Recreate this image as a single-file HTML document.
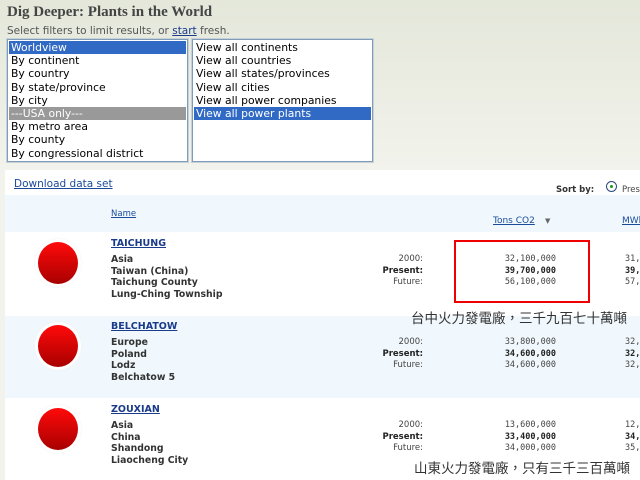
<!DOCTYPE html>
<html><head><meta charset="utf-8">
<style>
*{margin:0;padding:0;box-sizing:border-box}
body{width:640px;height:480px;overflow:hidden;position:relative;background:linear-gradient(#e4e7da,#f2f3ec 170px);font-family:"DejaVu Sans","Liberation Sans",sans-serif;}
.a{position:absolute;white-space:nowrap}
h1{position:absolute;left:7px;top:4px;font:bold 15px "Liberation Serif",serif;color:#444}
.sub{left:7px;top:25px;font-size:10.5px;color:#555}
.sub u{color:#1a3a8a}
.box{position:absolute;top:39px;height:123px;background:#fff;border:1px solid #7f9db9;box-shadow:0 0 0 1px #c8d0d8;padding:1px;font-size:10.8px;line-height:13.2px;color:#000}
.box div{padding-left:2px}
.sel{background:#316ac5;color:#fff}
.gr{background:#999;color:#fff}
.panel{position:absolute;left:5px;top:170px;width:635px;height:310px;background:#fff}
.lk{color:#1a4b9a;text-decoration:underline}
.bl{background:#f0f8fd}
.circ{position:absolute;width:46px;height:48px;border-radius:50%;background:#fff;box-shadow:0 0 2px #eee}
.circ i{position:absolute;left:3px;top:3px;width:40px;height:42px;border-radius:50%;background:linear-gradient(#ff0a0a,#a80000)}
.nm{font-size:9.5px;font-weight:bold;color:#1a3a8a;text-decoration:underline}
.info{font-size:9.3px;font-weight:bold;color:#333;line-height:11.5px}
.lab{font-size:8.5px;color:#444;line-height:11.5px;text-align:right;width:80px}
.num{font-family:"DejaVu Sans Mono","Liberation Mono",monospace;font-size:8.5px;color:#444;line-height:11.5px;text-align:right;width:100px}
.b{font-weight:bold;color:#222}
.cj{font-family:"Liberation Sans","Noto Sans CJK TC",sans-serif;font-size:13.5px;color:#333}
</style></head><body>
<h1>Dig Deeper: Plants in the World</h1>
<div class="a sub">Select filters to limit results, or <u>start</u> fresh.</div>
<div class="box" style="left:7px;width:181px">
<div class="sel">Worldview</div><div>By continent</div><div>By country</div><div>By state/province</div><div>By city</div><div class="gr">---USA only---</div><div>By metro area</div><div>By county</div><div>By congressional district</div></div>
<div class="box" style="left:192px;width:181px">
<div>View all continents</div><div>View all countries</div><div>View all states/provinces</div><div>View all cities</div><div>View all power companies</div><div class="sel">View all power plants</div></div>

<div class="panel"></div>
<div class="a lk" style="left:14px;top:178px;font-size:10.5px">Download data set</div>
<div class="a" style="left:556px;top:185px;font-size:8.5px;font-weight:bold;color:#333">Sort by:</div>
<div class="a" style="left:606px;top:181px;width:11px;height:11px;border:1px solid #2a4a7a;border-radius:50%"><i style="position:absolute;left:3px;top:3px;width:3px;height:3px;background:#1a9a1a;border-radius:50%"></i></div>
<div class="a" style="left:622px;top:185px;font-size:8.5px;color:#444">Pres</div>
<div class="a bl" style="left:5px;top:195px;width:635px;height:37px"></div>
<div class="a lk" style="left:111px;top:209px;font-size:8.5px">Name</div>
<div class="a lk" style="left:493px;top:216px;font-size:9px">Tons CO2</div>
<div class="a" style="left:545px;top:217px;font-size:7px;color:#666">▼</div>
<div class="a lk" style="left:622px;top:216px;font-size:9px">MWh</div>

<div class="a bl" style="left:5px;top:316px;width:635px;height:82px"></div>

<div class="circ a" style="left:35px;top:239px"><i></i></div>
<div class="a nm" style="left:111px;top:238px">TAICHUNG</div>
<div class="a info" style="left:111px;top:254px">Asia<br>Taiwan (China)<br>Taichung County<br>Lung-Ching Township</div>
<div class="a lab" style="left:343px;top:254px">2000:<br><b class="b">Present:</b><br>Future:</div>
<div class="a num" style="left:456px;top:254px">32,100,000<br><b class="b">39,700,000</b><br>56,100,000</div>
<div class="a num" style="left:625px;top:254px;text-align:left">31,<br><b class="b">39,</b><br>57,</div>
<div class="a" style="left:454px;top:240px;width:136px;height:63px;border:2px solid #e00"></div>
<div class="a cj" style="left:411px;top:307px">台中火力發電廠，三千九百七十萬噸</div>

<div class="circ a" style="left:35px;top:322px"><i></i></div>
<div class="a nm" style="left:111px;top:321px">BELCHATOW</div>
<div class="a info" style="left:111px;top:337px">Europe<br>Poland<br>Lodz<br>Belchatow 5</div>
<div class="a lab" style="left:343px;top:337px">2000:<br><b class="b">Present:</b><br>Future:</div>
<div class="a num" style="left:456px;top:337px">33,800,000<br><b class="b">34,600,000</b><br>34,600,000</div>
<div class="a num" style="left:625px;top:337px;text-align:left">32,<br><b class="b">32,</b><br>32,</div>

<div class="circ a" style="left:35px;top:405px"><i></i></div>
<div class="a nm" style="left:111px;top:404px">ZOUXIAN</div>
<div class="a info" style="left:111px;top:420px">Asia<br>China<br>Shandong<br>Liaocheng City</div>
<div class="a lab" style="left:343px;top:420px">2000:<br><b class="b">Present:</b><br>Future:</div>
<div class="a num" style="left:456px;top:420px">13,600,000<br><b class="b">33,400,000</b><br>34,000,000</div>
<div class="a num" style="left:625px;top:420px;text-align:left">12,<br><b class="b">34,</b><br>35,</div>
<div class="a cj" style="left:414px;top:457px">山東火力發電廠，只有三千三百萬噸</div>
</body></html>
